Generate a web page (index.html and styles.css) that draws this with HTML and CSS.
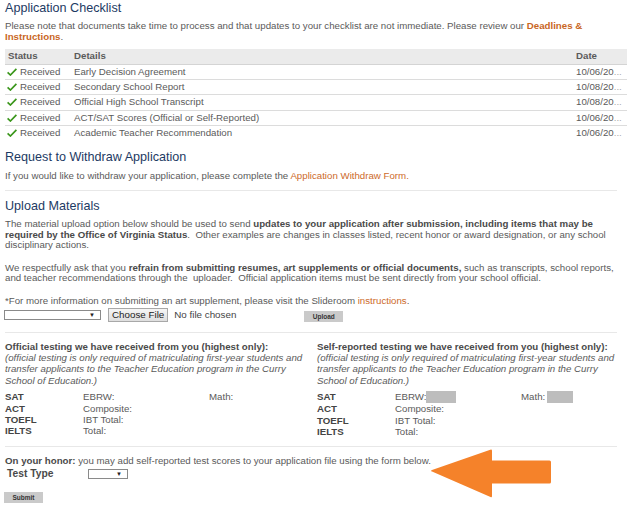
FILE: index.html
```html
<!DOCTYPE html>
<html lang="en">
<head>
    <meta charset="UTF-8">
    <meta name="viewport" content="width=device-width, initial-scale=1.0">
    <title>Application Status</title>
    <link rel="stylesheet" href="styles.css">
</head>
<body>
    <div class="page">
        <h2 class="section-title first">Application Checklist</h2>
        <p class="intro">Please note that documents take time to process and that updates to your checklist are not immediate. Please review our <a class="link-bold" href="#">Deadlines &amp; Instructions</a>.</p>

        <table class="checklist">
            <thead>
                <tr>
                    <th class="col-status">Status</th>
                    <th class="col-details">Details</th>
                    <th class="col-date">Date</th>
                </tr>
            </thead>
            <tbody>
                <tr>
                    <td><svg class="check" width="10" height="8" viewBox="0 0 10 8"><path d="M0.6 4.4 L3.4 7 L9.4 0.8" fill="none" stroke="#3a961b" stroke-width="1.7"/></svg>Received</td>
                    <td>Early Decision Agreement</td>
                    <td>10/06/20<span class="dots">...</span></td>
                </tr>
                <tr>
                    <td><svg class="check" width="10" height="8" viewBox="0 0 10 8"><path d="M0.6 4.4 L3.4 7 L9.4 0.8" fill="none" stroke="#3a961b" stroke-width="1.7"/></svg>Received</td>
                    <td>Secondary School Report</td>
                    <td>10/08/20<span class="dots">...</span></td>
                </tr>
                <tr>
                    <td><svg class="check" width="10" height="8" viewBox="0 0 10 8"><path d="M0.6 4.4 L3.4 7 L9.4 0.8" fill="none" stroke="#3a961b" stroke-width="1.7"/></svg>Received</td>
                    <td>Official High School Transcript</td>
                    <td>10/08/20<span class="dots">...</span></td>
                </tr>
                <tr>
                    <td><svg class="check" width="10" height="8" viewBox="0 0 10 8"><path d="M0.6 4.4 L3.4 7 L9.4 0.8" fill="none" stroke="#3a961b" stroke-width="1.7"/></svg>Received</td>
                    <td>ACT/SAT Scores (Official or Self-Reported)</td>
                    <td>10/06/20<span class="dots">...</span></td>
                </tr>
                <tr>
                    <td><svg class="check" width="10" height="8" viewBox="0 0 10 8"><path d="M0.6 4.4 L3.4 7 L9.4 0.8" fill="none" stroke="#3a961b" stroke-width="1.7"/></svg>Received</td>
                    <td>Academic Teacher Recommendation</td>
                    <td>10/06/20<span class="dots">...</span></td>
                </tr>
            </tbody>
        </table>

        <h2 class="section-title withdraw">Request to Withdraw Application</h2>
        <p class="withdraw-text">If you would like to withdraw your application, please complete the <a class="link" href="#">Application Withdraw Form.</a></p>

        <hr class="divider">

        <h2 class="section-title upload-title">Upload Materials</h2>
        <p>The material upload option below should be used to send <b>updates to your application after submission, including items that may be required by the Office of Virginia Status</b>.&nbsp; Other examples are changes in classes listed, recent honor or award designation, or any school disciplinary actions.</p>
        <p>We respectfully ask that you <b>refrain from submitting resumes, art supplements or official documents,</b> such as transcripts, school reports, and teacher recommendations through the&nbsp; uploader.&nbsp; Official application items must be sent directly from your school official.</p>
        <p class="note">*For more information on submitting an art supplement, please visit the Slideroom <a class="link" href="#">instructions</a>.</p>

        <div class="upload-row">
            <span class="select-box wide"><span class="caret">&#9660;</span></span>
            <span class="file-button">Choose File</span>
            <span class="file-name">No file chosen</span>
            <span class="small-button upload">Upload</span>
        </div>

        <hr class="divider">

        <div class="testing">
            <div class="testing-col">
                <div class="testing-head">Official testing we have received from you (highest only):</div>
                <div class="testing-note">(official testing is only required of matriculating first-year students and transfer applicants to the Teacher Education program in the Curry School of Education.)</div>
                <div class="scores">
                    <b>SAT</b><span>EBRW:</span><span>Math:</span>
                    <b>ACT</b><span>Composite:</span><span></span>
                    <b>TOEFL</b><span>IBT Total:</span><span></span>
                    <b>IELTS</b><span>Total:</span><span></span>
                </div>
            </div>
            <div class="testing-col">
                <div class="testing-head">Self-reported testing we have received from you (highest only):</div>
                <div class="testing-note">(official testing is only required of matriculating first-year students and transfer applicants to the Teacher Education program in the Curry School of Education.)</div>
                <div class="scores">
                    <b>SAT</b><span>EBRW:<i class="redacted"></i></span><span>Math:<i class="redacted short"></i></span>
                    <b>ACT</b><span>Composite:</span><span></span>
                    <b>TOEFL</b><span>IBT Total:</span><span></span>
                    <b>IELTS</b><span>Total:</span><span></span>
                </div>
            </div>
        </div>

        <hr class="divider">

        <div class="honor">
            <p><b>On your honor:</b> you may add self-reported test scores to your application file using the form below.</p>
            <div class="test-type">
                <b>Test Type</b>
                <span class="select-box narrow"><span class="caret">&#9660;</span></span>
            </div>
            <span class="small-button submit">Submit</span>

            <svg class="arrow" width="130" height="54" viewBox="0 0 130 54">
                <path d="M2 22.5 Q0 22 2 21 L61 0.5 Q62 0 62 2 L62 11.5 L119.5 11.5 Q121 11.5 121 13 L121 33 Q121 34.5 119.5 34.5 L62 34.5 L62 47 Q62 49 60.5 48 Z" fill="#f5822a"/>
            </svg>
        </div>
    </div>
</body>
</html>
```

FILE: styles.css
```css
body {
    margin: 0;
    font-family: 'Liberation Sans', Arial, sans-serif;
    font-size: 9.7px;
    line-height: 10.6px;
    color: #5a5a5a;
    background-color: #fff;
}

.page {
    padding: 0 5px;
    width: 622px;
}

p {
    margin: 0 0 12px;
}

b {
    color: #4a4a4a;
}

.section-title {
    margin: 0;
    font-size: 12.6px;
    line-height: 16px;
    font-weight: normal;
    color: #1d3a63;
}

.section-title.first {
    margin-bottom: 5px;
}

.section-title.withdraw {
    margin-top: 8px;
    margin-bottom: 6.5px;
}

.section-title.upload-title {
    margin-top: 7px;
    margin-bottom: 4.7px;
}

.intro {
    margin-bottom: 6.5px;
}

.withdraw-text {
    margin-bottom: 8.7px;
}

.link-bold {
    font-weight: bold;
    color: #c9661f;
    text-decoration: none;
}

.link {
    color: #cd6a2a;
    text-decoration: none;
}

.checklist {
    width: 622px;
    border-collapse: collapse;
}

.checklist th {
    background-color: #ebebeb;
    text-align: left;
    font-weight: bold;
    color: #5a5a5a;
    height: 15px;
    padding: 0 3px;
    border-bottom: 1px solid #d4d4d4;
}

.checklist td {
    height: 14.4px;
    padding: 0 3px;
    border-bottom: 1px solid #dcdcdc;
    white-space: nowrap;
}

.checklist tr:last-child td {
    border-bottom: none;
}

.col-status {
    width: 60px;
}

.col-date {
    width: 48px;
}

.check {
    vertical-align: -1px;
    margin: 0 3px 0 -1px;
}

.dots {
    color: #aaa;
}

.divider {
    border: none;
    border-top: 1px solid #e8e8e8;
    margin: 0;
    width: 612px;
}

.note {
    margin-top: 4px;
    margin-bottom: 1px;
}

.upload-row {
    display: flex;
    align-items: center;
    height: 15px;
    margin-bottom: 9.5px;
}

.select-box {
    display: inline-flex;
    justify-content: flex-end;
    align-items: center;
    box-sizing: border-box;
    height: 10px;
    border: 1px solid #8a8a8a;
    background-color: #fff;
}

.select-box.wide {
    width: 97px;
    margin-left: -1px;
}

.select-box.narrow {
    width: 40px;
}

.caret {
    font-size: 6px;
    line-height: 6px;
    color: #222;
    padding-right: 5px;
}

.file-button {
    box-sizing: border-box;
    height: 14px;
    line-height: 12px;
    margin-left: 7px;
    padding: 0 3px;
    border: 1px solid #a8a8a8;
    background: linear-gradient(#f6f6f6, #dedede);
    color: #222;
    font-size: 9.8px;
}

.file-name {
    width: 130px;
    margin-left: 6px;
    font-size: 9.8px;
    color: #444;
}

.small-button {
    display: inline-block;
    box-sizing: border-box;
    width: 39px;
    height: 11px;
    line-height: 11px;
    text-align: center;
    background-color: #cacaca;
    color: #333;
    font-size: 6.5px;
    font-weight: bold;
}

.upload {
    margin-top: 2px;
}

.testing {
    display: grid;
    grid-template-columns: 312px 310px;
    margin-top: 7.7px;
    line-height: 11.3px;
}

.testing-head {
    font-weight: bold;
    color: #4a4a4a;
}

.testing-note {
    font-style: italic;
    padding-right: 8px;
    margin-bottom: 5.4px;
}

.scores {
    display: grid;
    grid-template-columns: 78px 126px 1fr;
    margin-bottom: 8.5px;
}

.scores b {
    color: #444;
}

.redacted {
    display: inline-block;
    width: 30px;
    height: 12px;
    background-color: #bdbdbd;
    vertical-align: -3px;
}

.redacted.short {
    width: 26px;
    margin-left: 2px;
}

.honor {
    position: relative;
    padding-top: 8.7px;
}

.honor p {
    margin-bottom: 2.2px;
}

.test-type {
    display: flex;
    align-items: center;
    height: 11px;
    padding-left: 2px;
    margin-bottom: 13px;
}

.test-type b {
    width: 81px;
    font-size: 10.3px;
}

.submit {
    margin-left: -1px;
}

.arrow {
    position: absolute;
    left: 425px;
    top: 2px;
}
```
